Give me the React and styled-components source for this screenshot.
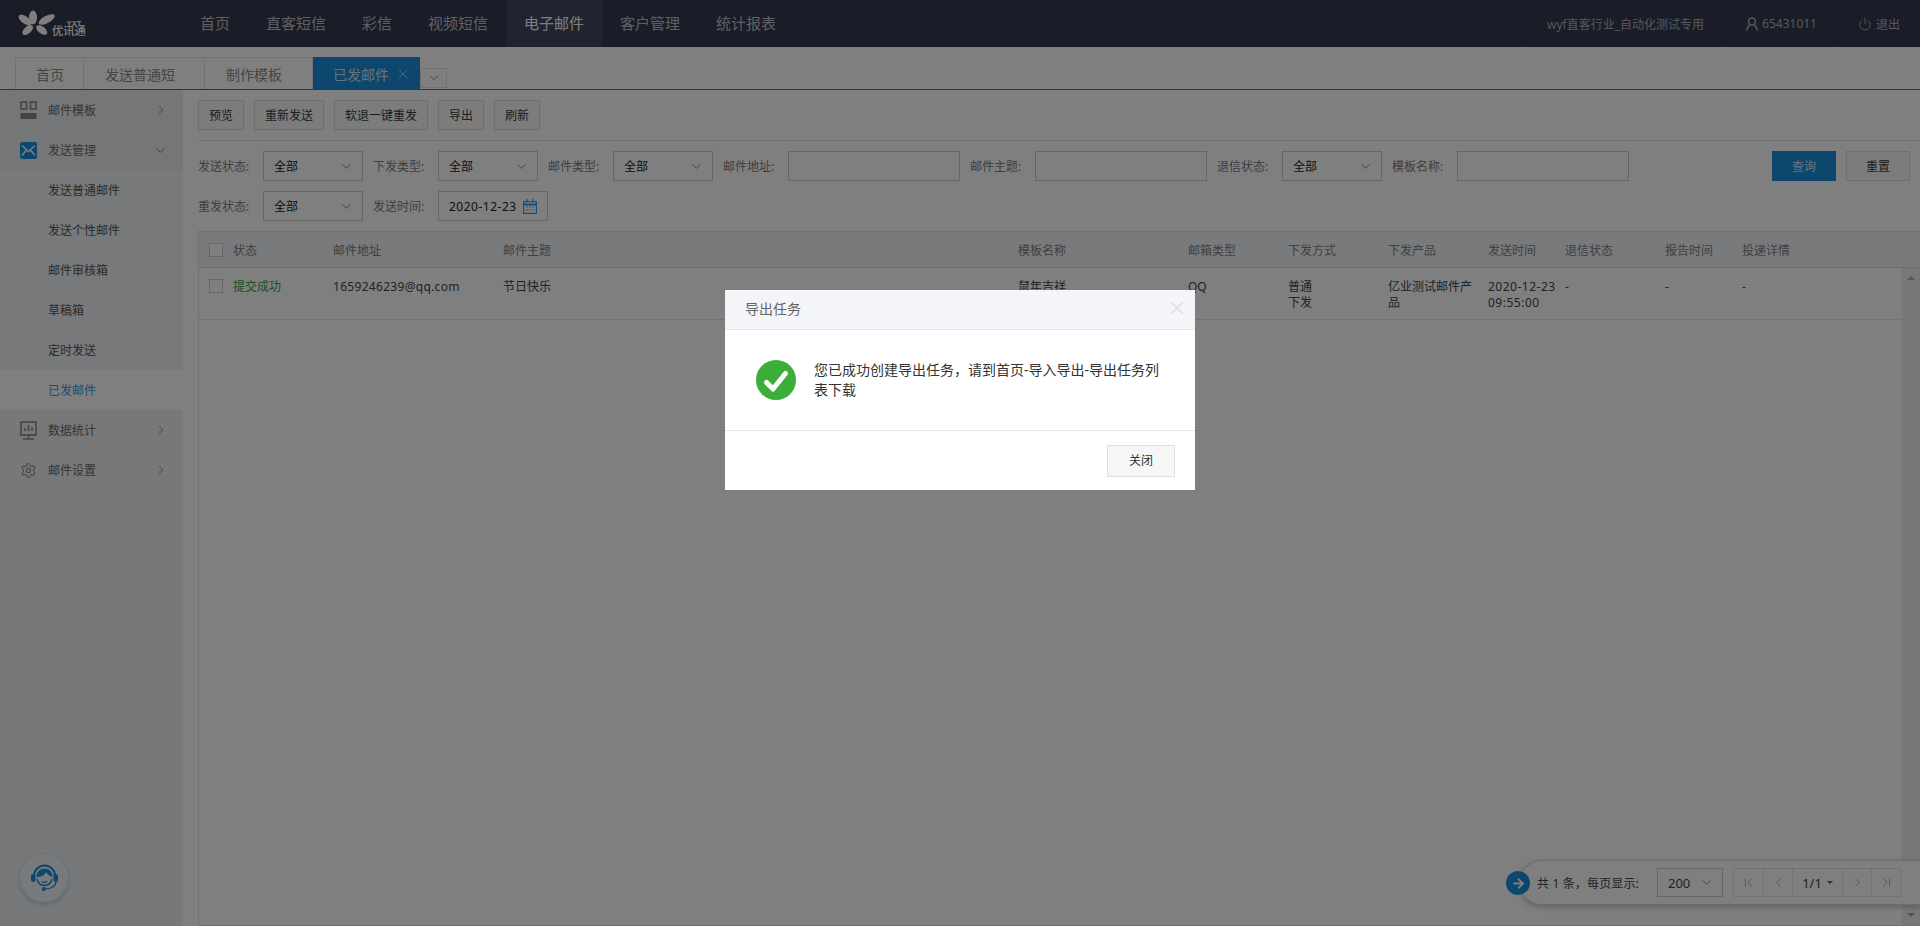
import React from 'react';
import styled, { createGlobalStyle } from 'styled-components';
import { ChevronRight, ChevronDown, ChevronLeft, Settings, Power, X, ChevronFirst, ChevronLast, ArrowRight } from 'lucide-react';

const Global = createGlobalStyle`
  html, body { margin: 0; padding: 0; height: 100%; overflow: hidden; }
  body { font-family: "Noto Sans", "Noto Sans CJK SC", sans-serif; font-size: 12px; color: #444; background: #fff; }
  * { box-sizing: border-box; }
`;

const Page = styled.div`
  position: relative; width: 1920px; height: 926px; display: flex; flex-direction: column; overflow: hidden; background: #fff;
`;
const TopBar = styled.header`
  height: 47px; flex: none; display: flex; background: #343a4e;
`;
const LogoBox = styled.div`
  width: 182px; flex: none; display: flex; align-items: center;
`;
const Nav = styled.nav`
  display: flex; flex: 1;
`;
const NavItem = styled.div`
  padding: 0 18px; line-height: 47px; font-size: 15px;
  color: ${p => (p.$active ? '#fff' : '#bfc1c8')};
  background: ${p => (p.$active ? '#424860' : 'transparent')};
`;
const UserCell = styled.div`
  display: flex; align-items: center; gap: 4px; height: 47px; padding: 0 ${p => p.$pad || 20}px; border-left: 1px solid #2c3143; font-size: 12px; color: #aeb0b8;
`;
const TabStrip = styled.div`
  height: 43px; flex: none; display: flex; align-items: flex-end; padding-left: 15px; border-bottom: 1px solid #2e7fc4;
`;
const Tab = styled.div`
  width: ${p => p.$w}px; height: 32px; display: flex; align-items: center; gap: 6px; padding-left: ${p => (p.$first || p.$active ? 20 : 21)}px; font-size: 14px;
  color: ${p => (p.$active ? '#cfe6f7' : '#8a8a8a')};
  background: ${p => (p.$active ? '#1a8fdc' : 'transparent')};
  border: 1px solid #e2e2e2; border-bottom: none; border-left-width: ${p => (p.$first ? 1 : 0)}px;
  ${p => p.$active && 'border-color: #1a8fdc;'}
`;
const TabMore = styled.div`
  width: 27px; height: 20px; margin-bottom: 1px; border: 1px solid #e2e2e2; display: flex; align-items: center; justify-content: center; color: #777;
`;
const Body = styled.div`
  flex: 1; display: flex; min-height: 0;
`;
const Sidebar = styled.aside`
  width: 183px; flex: none; background: #eff1f3;
`;
const MenuParent = styled.div`
  height: 40px; display: flex; align-items: center; padding: 0 15px 0 20px; color: #6a6a6a; background: ${p => (p.$shade ? '#ebedef' : 'transparent')};
`;
const MenuIcon = styled.span`
  width: 28px; flex: none; display: flex; align-items: center;
`;
const MenuLabel = styled.span`
  flex: 1;
`;
const MenuChild = styled.div`
  height: 40px; line-height: 42px; padding-left: 48px; color: ${p => (p.$active ? '#2d9fe8' : '#555')}; background: ${p => (p.$active ? '#fff' : '#f1f3f5')};
`;
const Main = styled.main`
  flex: 1; min-width: 0; padding: 10px 0 0 15px; display: flex; flex-direction: column;
`;
const Toolbar = styled.div`
  display: flex; gap: 10px; padding-bottom: 10px; border-bottom: 1px solid #e4e4e4;
`;
const Button = styled.div`
  height: 30px; padding: 0 10px; line-height: 30px; border: 1px solid ${p => (p.$primary ? '#1a8fdc' : '#dcdcdc')}; background: ${p => (p.$primary ? '#1a8fdc' : '#f8f8f8')}; color: ${p => (p.$primary ? '#cfe6f7' : '#3a3a3a')}; text-align: center; width: ${p => (p.$w ? p.$w + 'px' : 'auto')};
`;
const Form = styled.div`
  margin-top: 10px; padding-right: 10px;
`;
const FormRow = styled.div`
  display: flex; align-items: center; height: 30px; margin-bottom: 10px;
`;
const Label = styled.span`
  width: 65px; flex: none; color: #7c7c7c;
`;
const Select = styled.div`
  width: ${p => p.$w || 100}px; height: 30px; margin-right: 10px; padding: 0 8px 0 10px; border: 1px solid #ccc; display: flex; align-items: center; justify-content: space-between; color: #222;
`;
const Input = styled.div`
  width: 172px; height: 30px; margin-right: 10px; border: 1px solid #ccc;
`;
const DateBox = styled.div`
  width: 110px; height: 30px; padding: 0 10px; border: 1px solid #ccc; display: flex; align-items: center; justify-content: space-between; color: #222; letter-spacing: .5px;
`;
const FormActions = styled.div`
  margin-left: auto; display: flex; gap: 10px;
`;
const Table = styled.div`
  flex: 1; min-height: 0; display: flex; flex-direction: column; border: 1px solid #dfe1e6; border-right: none;
`;
const Columns = '34px 100px 170px 515px 170px 100px 100px 100px 77px 100px 77px 1fr';
const HeadRow = styled.div`
  height: 36px; flex: none; display: grid; grid-template-columns: ${Columns}; align-items: center; background: #f3f4f8; border-bottom: 1px solid #dfe1e6; color: #808080;
`;
const TableBody = styled.div`
  flex: 1; display: flex; min-height: 0;
`;
const Rows = styled.div`
  flex: 1; min-width: 0;
`;
const DataRow = styled.div`
  height: 52px; display: grid; grid-template-columns: ${Columns}; border-bottom: 1px solid #e4e4e4; padding-top: 11px; color: #444; line-height: 16px;
`;
const CheckCell = styled.div`
  padding-left: 10px;
`;
const Check = styled.div`
  width: 14px; height: 14px; border: 1px solid #ccc; background: #fff;
`;
const Cell = styled.div`
  padding-right: ${p => (p.$flush ? 0 : 12)}px; color: ${p => p.$color || 'inherit'}; letter-spacing: ${p => p.$track || 0}px;
`;
const NarrowText = styled.span`
  display: block; width: 24px;
`;
const Scrollbar = styled.div`
  width: 18px; flex: none; background: #f1f1f1; display: flex; flex-direction: column; justify-content: space-between; align-items: center; padding: 8px 0;
`;
const Tri = styled.div`
  width: 0; height: 0; border-left: 4px solid transparent; border-right: 4px solid transparent;
  ${p => (p.$down ? 'border-top: 4px solid #a8a8a8;' : 'border-bottom: 4px solid #a8a8a8;')}
`;
const PagerBar = styled.div`
  position: absolute; left: 1519px; right: 0; bottom: 21px; height: 45px; background: #fff; border: 1px solid #ddd; border-right: none; border-radius: 23px 0 0 23px; box-shadow: 0 2px 6px rgba(0,0,0,.25); display: flex; align-items: center; padding-left: 17px; color: #444;
`;
const PagerToggle = styled.div`
  position: absolute; left: -14px; top: 10px; width: 24px; height: 24px; border-radius: 50%; background: #1a8fdc; display: flex; align-items: center; justify-content: center; color: #fff;
`;
const PagerText = styled.span`
  width: 120px; flex: none; letter-spacing: .15px;
`;
const PageSize = styled.div`
  width: 66px; height: 29px; border: 1px solid #ccc; display: flex; align-items: center; justify-content: space-between; padding: 0 8px 0 10px; font-size: 13px; margin-right: 10px;
`;
const Pager = styled.div`
  display: flex; height: 29px; border: 1px solid #e6e6e6;
`;
const PageBtn = styled.div`
  width: ${p => p.$w || 29}px; display: flex; align-items: center; justify-content: center; gap: 5px; border-left: 1px solid #e6e6e6; color: ${p => (p.$text ? '#444' : '#aaa')}; font-size: 13px;
  &:first-child { border-left: none; }
`;
const Caret = styled.span`
  width: 0; height: 0; border-left: 3px solid transparent; border-right: 3px solid transparent; border-top: 3px solid #555;
`;
const Support = styled.div`
  position: absolute; left: 20px; top: 854px; width: 48px; height: 48px; border-radius: 50%; background: #f2f4f6; box-shadow: 0 2px 5px rgba(26,143,220,.35); display: flex; align-items: center; justify-content: center;
`;
const Overlay = styled.div`
  position: absolute; inset: 0; background: rgba(0,0,0,.5); display: flex; justify-content: center; padding-top: 290px;
`;
const Modal = styled.div`
  width: 470px; height: 200px; background: #fff; display: flex; flex-direction: column;
`;
const ModalHead = styled.div`
  height: 40px; flex: none; background: #f3f5f9; border-bottom: 1px solid #e3e5ea; padding: 0 8px 3px 20px; display: flex; align-items: center; justify-content: space-between; font-size: 14px; color: #666;
`;
const ModalBody = styled.div`
  height: 101px; flex: none; border-bottom: 1px solid #e3e5ea; display: flex; align-items: center; padding: 0 30px 0 31px; gap: 19px;
`;
const ModalText = styled.div`
  font-size: 14px; line-height: 20px; color: #333; flex: 1; margin-left: -1px;
`;
const ModalFoot = styled.div`
  flex: 1; display: flex; justify-content: flex-end; align-items: center; padding-right: 20px;
`;
const CloseButton = styled.div`
  width: 68px; height: 32px; line-height: 30px; text-align: center; background: #f6f6f6; border: 1px solid #dedede; color: #333;
`;

const Logo = () => (
  <svg width="100" height="47" viewBox="0 0 100 47">
    <g fill="#fff">
      <ellipse cx="33" cy="17.5" rx="4" ry="7" />
      <ellipse cx="46.7" cy="19.5" rx="9" ry="3.6" transform="rotate(-28 46.7 19.5)" />
      <ellipse cx="41.7" cy="30" rx="6.5" ry="3.5" transform="rotate(38 41.7 30)" />
      <ellipse cx="27.7" cy="30" rx="6.5" ry="3.5" transform="rotate(-42 27.7 30)" />
      <ellipse cx="25" cy="20" rx="7.5" ry="3.6" transform="rotate(35 25 20)" />
      <text x="67" y="25.5" fontSize="7" fontWeight="700" letterSpacing=".5">YXT</text>
      <text x="52" y="34.5" fontSize="11.3" fontWeight="500">优讯通</text>
    </g>
  </svg>
);
const TemplateIcon = () => (
  <svg width="17" height="19" viewBox="0 0 17 19" fill="none" stroke="#888" strokeWidth="1.6">
    <rect x="1" y="1" width="5.5" height="7" /><rect x="10.5" y="1" width="5.5" height="7" />
    <rect x="0.5" y="12" width="16" height="6" fill="#888" stroke="none" />
  </svg>
);
const MailIcon = () => (
  <svg width="17" height="17" viewBox="0 0 17 17">
    <rect width="17" height="17" rx="2" fill="#1a8fdc" />
    <path d="M2 3.5 8.5 9.5 15 3.5M2 13.5l4.5-5.5M15 13.5 10.5 8" fill="none" stroke="#fff" strokeWidth="1.4" />
  </svg>
);
const ChartIcon = () => (
  <svg width="17" height="19" viewBox="0 0 17 19" fill="none" stroke="#888" strokeWidth="1.6">
    <rect x="1" y="1" width="15" height="13" />
    <path d="M5 10V7M8.5 10V4M12 10V6M8.5 14v3M3 18h11" />
  </svg>
);
const CalendarIcon = () => (
  <svg width="14" height="15" viewBox="0 0 14 15" fill="none" stroke="#2d9fe8" strokeWidth="1.2">
    <rect x="0.6" y="2.6" width="12.8" height="11.8" />
    <path d="M0.6 5.5h12.8" strokeWidth="2" />
    <path d="M4 0v3M10 0v3" />
    <path d="M3 8h1.6M6.2 8h1.6M9.4 8h1.6M3 11h1.6M6.2 11h1.6M9.4 11h1.6" />
  </svg>
);
const UserIcon = () => (
  <svg width="12" height="14" viewBox="0 0 12 14" fill="none" stroke="#aeb0b8" strokeWidth="1.5">
    <circle cx="6" cy="4.5" r="3.5" />
    <path d="M0.8 13.5c.5-3 2-5 3.2-5.5M11.2 13.5c-.5-3-2-5-3.2-5.5" />
  </svg>
);
const Headset = () => (
  <svg width="27" height="28" viewBox="0 0 27 28">
    <path d="M5.5 13C5.5 8 9 4.5 13.5 4.5S21.5 8 21.5 13C18.5 12 16 10 15 8C14 11 10 13 5.5 13z" fill="#1a8fdc" />
    <path d="M3 12a10.5 10.5 0 0 1 21 0" fill="none" stroke="#1a8fdc" strokeWidth="2" />
    <rect x="0" y="10" width="4.5" height="8" rx="2" fill="#1a8fdc" />
    <rect x="22.5" y="10" width="4.5" height="8" rx="2" fill="#1a8fdc" />
    <path d="M6 15c1 4 4 6.5 7.5 6.5s6.5-2.5 7.5-6.5" fill="none" stroke="#1a8fdc" strokeWidth="1.4" />
    <path d="M11 17.5c1.5 1 3.5 1 5 0" fill="none" stroke="#1a8fdc" strokeWidth="1.1" />
    <path d="M25 18c0 4-5 7-11 7" fill="none" stroke="#1a8fdc" strokeWidth="1.2" />
    <circle cx="12.8" cy="25" r="2" fill="#1a8fdc" />
  </svg>
);
const SuccessIcon = () => (
  <svg width="40" height="40" viewBox="0 0 40 40">
    <circle cx="20" cy="20" r="20" fill="#3bae39" />
    <path d="M10.5 22.5 17 29 29.5 13.5" fill="none" stroke="#fff" strokeWidth="5" strokeLinecap="round" strokeLinejoin="round" />
  </svg>
);

const navItems = ['首页', '直客短信', '彩信', '视频短信', '电子邮件', '客户管理', '统计报表'];
const heads = ['状态', '邮件地址', '邮件主题', '模板名称', '邮箱类型', '下发方式', '下发产品', '发送时间', '退信状态', '报告时间', '投递详情'];
const children = ['发送普通邮件', '发送个性邮件', '邮件审核箱', '草稿箱', '定时发送', '已发邮件'];
const Down = () => <ChevronDown size={15} color="#777" strokeWidth={1.4} />;
const Arrow = () => <ChevronRight size={14} color="#777" strokeWidth={1.4} />;

export default function App() {
  return (
    <Page>
      <Global />
      <TopBar>
        <LogoBox><Logo /></LogoBox>
        <Nav>{navItems.map(n => <NavItem key={n} $active={n === '电子邮件'}>{n}</NavItem>)}</Nav>
        <UserCell $pad={21}>wyf直客行业_自动化测试专用</UserCell>
        <UserCell><UserIcon />65431011</UserCell>
        <UserCell><Power size={14} strokeWidth={1.6} />退出</UserCell>
      </TopBar>
      <TabStrip>
        <Tab $w={69} $first>首页</Tab>
        <Tab $w={121}>发送普通短</Tab>
        <Tab $w={108}>制作模板</Tab>
        <Tab $w={107} $active>已发邮件<X size={16} strokeWidth={1} /></Tab>
        <TabMore><ChevronDown size={14} strokeWidth={1.4} /></TabMore>
      </TabStrip>
      <Body>
        <Sidebar>
          <MenuParent $shade><MenuIcon><TemplateIcon /></MenuIcon><MenuLabel>邮件模板</MenuLabel><Arrow /></MenuParent>
          <MenuParent $shade><MenuIcon><MailIcon /></MenuIcon><MenuLabel>发送管理</MenuLabel><Down /></MenuParent>
          {children.map(c => <MenuChild key={c} $active={c === '已发邮件'}>{c}</MenuChild>)}
          <MenuParent><MenuIcon><ChartIcon /></MenuIcon><MenuLabel>数据统计</MenuLabel><Arrow /></MenuParent>
          <MenuParent><MenuIcon><Settings size={17} color="#888" strokeWidth={1.5} /></MenuIcon><MenuLabel>邮件设置</MenuLabel><Arrow /></MenuParent>
        </Sidebar>
        <Main>
          <Toolbar>
            <Button>预览</Button>
            <Button>重新发送</Button>
            <Button>软退一键重发</Button>
            <Button>导出</Button>
            <Button>刷新</Button>
          </Toolbar>
          <Form>
            <FormRow>
              <Label>发送状态:</Label><Select>全部<Down /></Select>
              <Label>下发类型:</Label><Select>全部<Down /></Select>
              <Label>邮件类型:</Label><Select>全部<Down /></Select>
              <Label>邮件地址:</Label><Input />
              <Label>邮件主题:</Label><Input />
              <Label>退信状态:</Label><Select>全部<Down /></Select>
              <Label>模板名称:</Label><Input />
              <FormActions>
                <Button $primary $w={64}>查询</Button>
                <Button $w={64}>重置</Button>
              </FormActions>
            </FormRow>
            <FormRow>
              <Label>重发状态:</Label><Select>全部<Down /></Select>
              <Label>发送时间:</Label><DateBox>2020-12-23<CalendarIcon /></DateBox>
            </FormRow>
          </Form>
          <Table>
            <HeadRow>
              <CheckCell><Check /></CheckCell>
              {heads.map(h => <Cell key={h}>{h}</Cell>)}
            </HeadRow>
            <TableBody>
              <Rows>
                <DataRow>
                  <CheckCell><Check /></CheckCell>
                  <Cell $color="#3f9a3f">提交成功</Cell>
                  <Cell $track={0.3}>1659246239@qq.com</Cell>
                  <Cell>节日快乐</Cell>
                  <Cell>鼠年吉祥</Cell>
                  <Cell>QQ</Cell>
                  <Cell><NarrowText>普通下发</NarrowText></Cell>
                  <Cell>亿业测试邮件产品</Cell>
                  <Cell $flush $track={0.5}>2020-12-23 09:55:00</Cell>
                  <Cell>-</Cell>
                  <Cell>-</Cell>
                  <Cell>-</Cell>
                </DataRow>
              </Rows>
              <Scrollbar><Tri /><Tri $down /></Scrollbar>
            </TableBody>
          </Table>
        </Main>
      </Body>
      <Support><Headset /></Support>
      <PagerBar>
        <PagerToggle><ArrowRight size={15} strokeWidth={3} /></PagerToggle>
        <PagerText>共 1 条，每页显示:</PagerText>
        <PageSize>200<Down /></PageSize>
        <Pager>
          <PageBtn><ChevronFirst size={15} strokeWidth={1.4} /></PageBtn>
          <PageBtn><ChevronLeft size={15} strokeWidth={1.4} /></PageBtn>
          <PageBtn $w={50} $text>1/1<Caret /></PageBtn>
          <PageBtn><ChevronRight size={15} strokeWidth={1.4} /></PageBtn>
          <PageBtn><ChevronLast size={15} strokeWidth={1.4} /></PageBtn>
        </Pager>
      </PagerBar>
      <Overlay>
        <Modal>
          <ModalHead>导出任务<X size={20} color="#dcdee4" strokeWidth={2} /></ModalHead>
          <ModalBody>
            <SuccessIcon />
            <ModalText>您已成功创建导出任务，请到首页-导入导出-导出任务列表下载</ModalText>
          </ModalBody>
          <ModalFoot><CloseButton>关闭</CloseButton></ModalFoot>
        </Modal>
      </Overlay>
    </Page>
  );
}
